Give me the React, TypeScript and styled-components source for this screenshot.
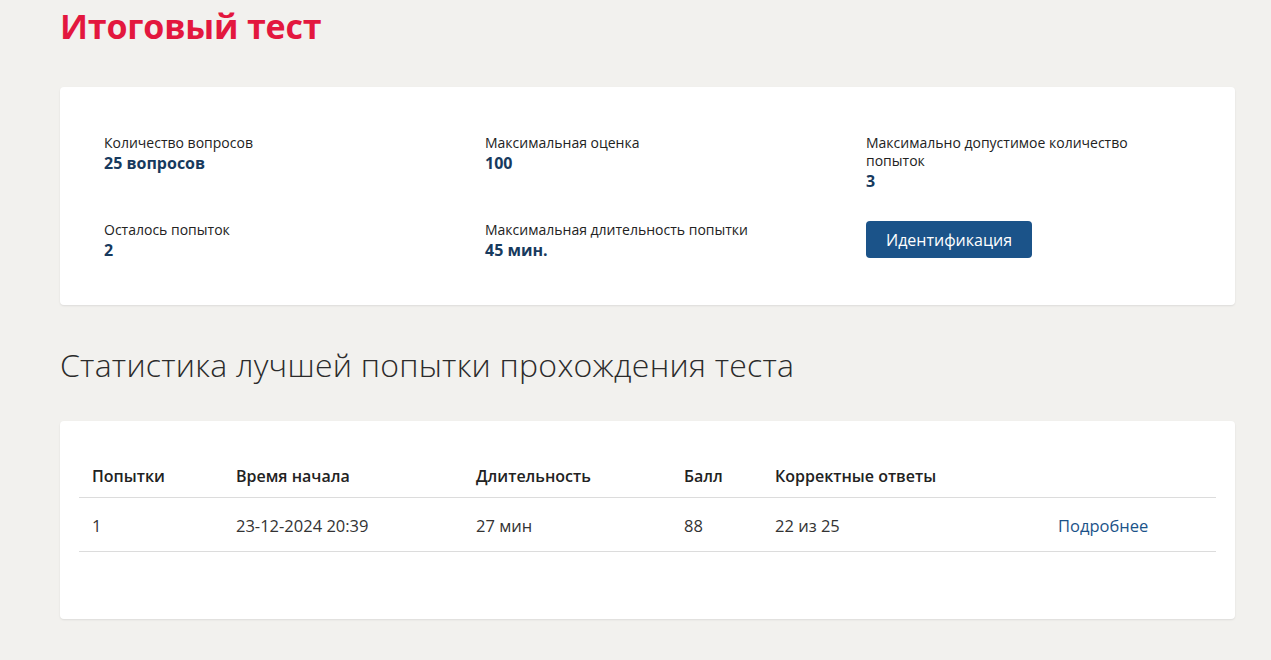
import styled, { createGlobalStyle } from "styled-components";

const GlobalStyle = createGlobalStyle`
  html, body {
    margin: 0;
    padding: 0;
    background: #f2f1ee;
  }
  body {
    font-family: "Open Sans", "Noto Sans", sans-serif;
    color: #222;
  }
`;

const info = [
  { label: "Количество вопросов", value: "25 вопросов" },
  { label: "Максимальная оценка", value: "100" },
  { label: "Максимально допустимое количество попыток", value: "3" },
  { label: "Осталось попыток", value: "2" },
  { label: "Максимальная длительность попытки", value: "45 мин." },
];

const columns = [
  { title: "Попытки", width: 144 },
  { title: "Время начала", width: 240 },
  { title: "Длительность", width: 208 },
  { title: "Балл", width: 91 },
  { title: "Корректные ответы", width: 283 },
  { title: "", width: 171 },
];

const rows = [["1", "23-12-2024 20:39", "27 мин", "88", "22 из 25"]];

function App() {
  return (
    <Page>
      <GlobalStyle />
      <Title>Итоговый тест</Title>
      <Card>
        <InfoGrid>
          {info.map((item) => (
            <InfoItem key={item.label}>
              <Label>{item.label}</Label>
              <Value>{item.value}</Value>
            </InfoItem>
          ))}
          <InfoItem>
            <Button>Идентификация</Button>
          </InfoItem>
        </InfoGrid>
      </Card>
      <Subtitle>Статистика лучшей попытки прохождения теста</Subtitle>
      <TableCard>
        <Table>
          <colgroup>
            {columns.map((c, i) => (
              <col key={i} style={{ width: c.width }} />
            ))}
          </colgroup>
          <thead>
            <tr>
              {columns.map((c, i) => (
                <Th key={i}>{c.title}</Th>
              ))}
            </tr>
          </thead>
          <tbody>
            {rows.map((r, i) => (
              <tr key={i}>
                {r.map((cell, j) => (
                  <Td key={j}>{cell}</Td>
                ))}
                <Td>
                  <Link href="#">Подробнее</Link>
                </Td>
              </tr>
            ))}
          </tbody>
        </Table>
      </TableCard>
    </Page>
  );
}

export default App;

const Page = styled.div`
  padding: 4px 36px 40px 60px;
`;

const Title = styled.h1`
  margin: 0 0 39px;
  font-family: "Open Sans", sans-serif;
  font-size: 34px;
  line-height: 44px;
  font-weight: 700;
  color: #e3173e;
  letter-spacing: -0.2px;
`;

const Card = styled.div`
  background: #fff;
  border-radius: 4px;
  box-shadow: 0 1px 2px rgba(0, 0, 0, 0.09);
  padding: 47px 44px 44px 44px;
`;

const InfoGrid = styled.div`
  display: grid;
  grid-template-columns: repeat(3, 300px);
  column-gap: 81px;
  row-gap: 29px;
`;

const InfoItem = styled.div`
  display: flex;
  flex-direction: column;
`;

const Label = styled.div`
  font-size: 14px;
  line-height: 18px;
  color: #222;
`;

const Value = styled.div`
  font-size: 16px;
  line-height: 22px;
  font-weight: 700;
  color: #173a5e;
`;

const Button = styled.button`
  align-self: flex-start;
  height: 37px;
  padding: 0 20px;
  border: none;
  border-radius: 4px;
  background: #1b5389;
  color: #fff;
  font-family: "Open Sans", sans-serif;
  font-size: 16px;
  cursor: pointer;
`;

const Subtitle = styled.h2`
  margin: 40px 0 36px;
  font-family: "Open Sans", sans-serif;
  font-size: 32px;
  line-height: 40px;
  font-weight: 300;
  letter-spacing: 0.25px;
  color: #2b2b2b;
`;

const TableCard = styled.div`
  background: #fff;
  border-radius: 4px;
  box-shadow: 0 1px 2px rgba(0, 0, 0, 0.09);
  padding: 33px 19px 67px;
`;

const Table = styled.table`
  width: 100%;
  border-collapse: collapse;
  table-layout: fixed;
`;

const Th = styled.th`
  text-align: left;
  padding: 10px 13px 9px;
  font-size: 16px;
  line-height: 24px;
  font-weight: 600;
  color: #222;
  border-bottom: 1px solid #dcdcdc;
`;

const Td = styled.td`
  padding: 16px 13px 13px;
  font-size: 16.5px;
  line-height: 24px;
  color: #333;
  border-bottom: 1px solid #dcdcdc;
`;

const Link = styled.a`
  color: #1b5389;
  text-decoration: none;
`;
